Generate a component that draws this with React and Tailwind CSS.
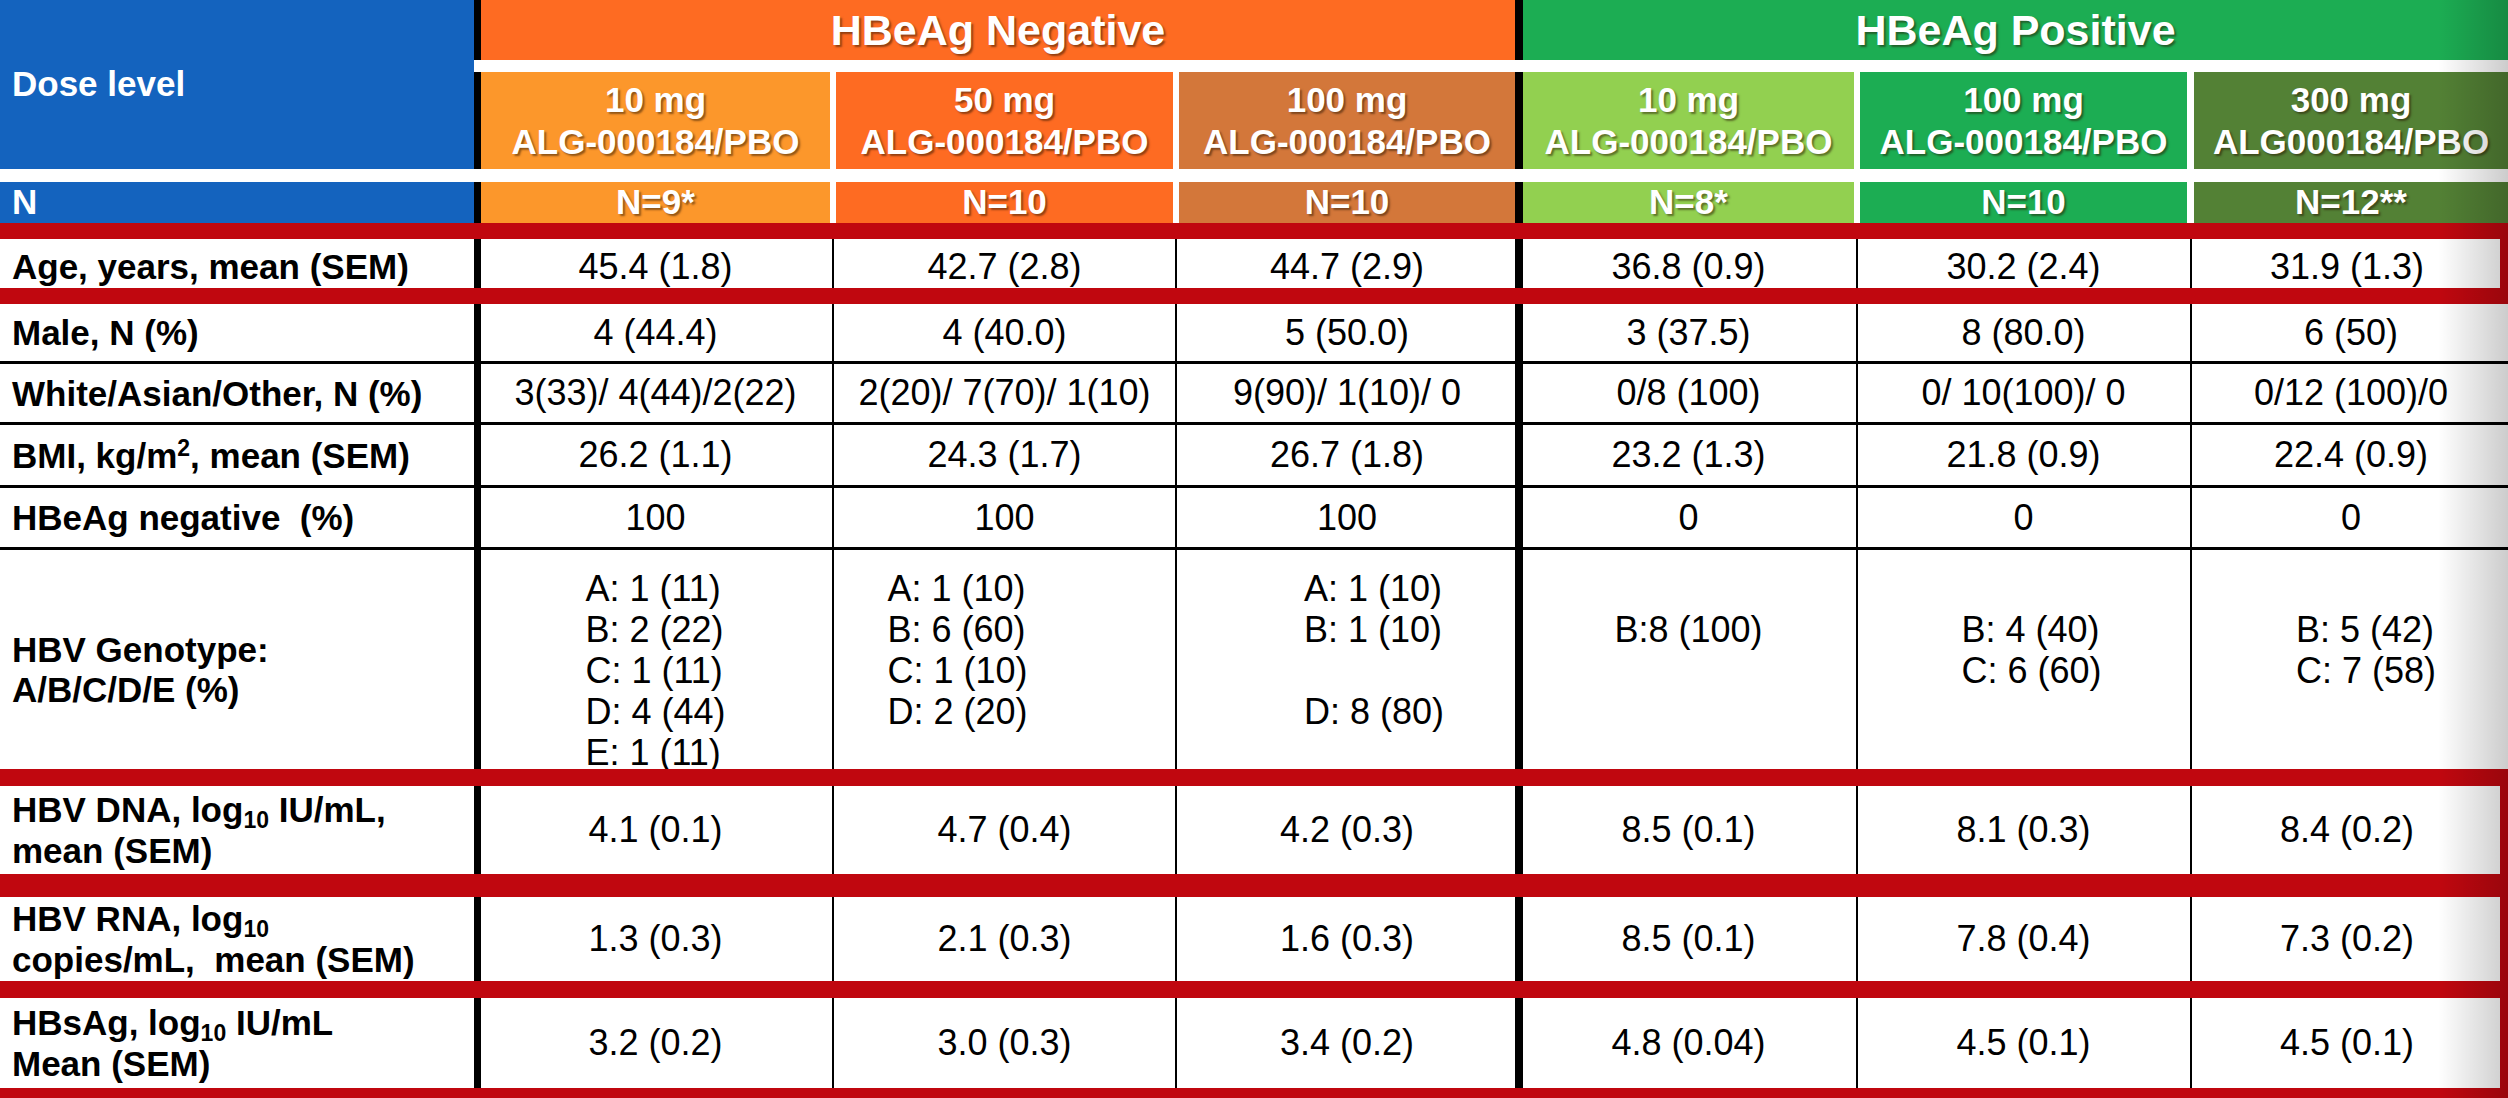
import React from "react";

const cellW = ["w-[349px]", "w-[337px]", "w-[336px]", "w-[331px]", "w-[327px]", "flex-1"];
const headBg = [
  "bg-[#fc972b]",
  "bg-[#fe6b22]",
  "bg-[#d3773a]",
  "bg-[#92d050]",
  "bg-[#1cad53]",
  "bg-[#538135]",
];
const shadow = "[text-shadow:2px_2px_2px_rgba(40,20,0,0.5)]";

// separators inside data rows: thick black at the group edges, thin ones between doses
function VLine({ i }) {
  if (i === 0) return <div className="w-[7px] shrink-0 bg-black" />;
  if (i === 3) return <div className="w-[8px] shrink-0 bg-black" />;
  return (
    <div className={`${i === 5 ? "w-[7px]" : "w-[6px]"} shrink-0 flex justify-center`}>
      <div className="w-[2px] bg-black" />
    </div>
  );
}

// separators inside the coloured header rows
function HGap({ i }) {
  if (i === 0) return <div className="w-[7px] shrink-0 bg-black" />;
  if (i === 3) return <div className="w-[8px] shrink-0 bg-black" />;
  return <div className={`${i === 5 ? "w-[7px]" : "w-[6px]"} shrink-0 bg-white`} />;
}

function Red({ h }) {
  return <div className={`${h} bg-[#c0070f]`} />;
}

function HLine() {
  return <div className="h-[3px] bg-black" />;
}

function DataRow({ height, label, values, boxed, pad = "" }) {
  return (
    <div className={`flex ${height}`}>
      <div
        className={`w-[474px] shrink-0 flex items-center pl-[12px] font-bold text-[35px] leading-[41px] ${pad}`}
      >
        <div>{label}</div>
      </div>
      {values.map((v, i) => (
        <React.Fragment key={i}>
          <VLine i={i} />
          <div className={`${cellW[i]} shrink-0 flex items-center justify-center text-[36px] whitespace-pre ${pad}`}>
            {v}
          </div>
        </React.Fragment>
      ))}
      {boxed ? <div className="w-[8px] shrink-0 bg-[#c0070f]" /> : null}
    </div>
  );
}

const doses = [
  ["10 mg", "ALG-000184/PBO"],
  ["50 mg", "ALG-000184/PBO"],
  ["100 mg", "ALG-000184/PBO"],
  ["10 mg", "ALG-000184/PBO"],
  ["100 mg", "ALG-000184/PBO"],
  ["300 mg", "ALG000184/PBO"],
];
const ns = ["N=9*", "N=10", "N=10", "N=8*", "N=10", "N=12**"];

const geno = [
  { lines: ["A: 1 (11)", "B: 2 (22)", "C: 1 (11)", "D: 4 (44)", "E: 1 (11)"], pad: "" },
  { lines: ["A: 1 (10)", "B: 6 (60)", "C: 1 (10)", "D: 2 (20)"], pad: "pr-[94px]" },
  { lines: ["A: 1 (10)", "B: 1 (10)", "", "D: 8 (80)"], pad: "pl-[54px]" },
  { lines: ["", "B:8 (100)"], pad: "" },
  { lines: ["", "B: 4 (40)", "C: 6 (60)"], pad: "pl-[16px]" },
  { lines: ["", "B: 5 (42)", "C: 7 (58)"], pad: "pl-[30px]" },
];

const Sub = () => <sub className="text-[23px]">10</sub>;

export default function App() {
  return (
    <div className="relative w-[2508px] h-[1098px] overflow-hidden bg-white text-black font-['Liberation_Sans',Arial,sans-serif]">
      {/* header */}
      <div className="flex h-[169px]">
        <div className="w-[474px] shrink-0 bg-[#1463be] flex items-center pl-[12px] text-white font-bold text-[35px]">
          Dose level
        </div>
        <div className="flex-1 flex flex-col">
          <div className={`flex h-[60px] text-white font-bold text-[43px] ${shadow}`}>
            <div className="w-[7px] shrink-0 bg-black" />
            <div className="w-[1034px] shrink-0 bg-[#fe6b22] flex items-center justify-center">HBeAg Negative</div>
            <div className="w-[8px] shrink-0 bg-black" />
            <div className="flex-1 bg-[#1cad53] flex items-center justify-center">HBeAg Positive</div>
          </div>
          <div className="h-[12px]" />
          <div className={`flex flex-1 text-white font-bold text-[35px] leading-[42px] ${shadow}`}>
            {doses.map((d, i) => (
              <React.Fragment key={i}>
                <HGap i={i} />
                <div className={`${cellW[i]} shrink-0 ${headBg[i]} flex flex-col items-center justify-center`}>
                  <div>{d[0]}</div>
                  <div>{d[1]}</div>
                </div>
              </React.Fragment>
            ))}
          </div>
        </div>
      </div>
      <div className="h-[13px]" />

      {/* N row */}
      <div className="flex h-[41px] text-white font-bold text-[35px]">
        <div className="w-[474px] shrink-0 bg-[#1463be] flex items-center pl-[12px]">N</div>
        {ns.map((n, i) => (
          <React.Fragment key={i}>
            <HGap i={i} />
            <div className={`${cellW[i]} shrink-0 ${headBg[i]} flex items-center justify-center ${shadow}`}>{n}</div>
          </React.Fragment>
        ))}
      </div>

      <Red h="h-[16px]" />
      <DataRow
        height="h-[49px]"
        boxed
        pad="pt-[6px]"
        label="Age, years, mean (SEM)"
        values={["45.4 (1.8)", "42.7 (2.8)", "44.7 (2.9)", "36.8 (0.9)", "30.2 (2.4)", "31.9 (1.3)"]}
      />
      <Red h="h-[16px]" />
      <DataRow
        height="h-[57px]"
        label="Male, N (%)"
        values={["4 (44.4)", "4 (40.0)", "5 (50.0)", "3 (37.5)", "8 (80.0)", "6 (50)"]}
      />
      <HLine />
      <DataRow
        height="h-[58px]"
        label="White/Asian/Other, N (%)"
        values={["3(33)/ 4(44)/2(22)", "2(20)/ 7(70)/ 1(10)", "9(90)/ 1(10)/ 0", "0/8 (100)", "0/ 10(100)/ 0", "0/12 (100)/0"]}
      />
      <HLine />
      <DataRow
        height="h-[60px]"
        label={
          <>
            BMI, kg/m<sup className="text-[23px]">2</sup>, mean (SEM)
          </>
        }
        values={["26.2 (1.1)", "24.3 (1.7)", "26.7 (1.8)", "23.2 (1.3)", "21.8 (0.9)", "22.4 (0.9)"]}
      />
      <HLine />
      <DataRow
        height="h-[59px]"
        label={<span className="whitespace-pre">HBeAg negative  (%)</span>}
        values={["100", "100", "100", "0", "0", "0"]}
      />
      <HLine />

      {/* genotype row */}
      <div className="flex h-[219px]">
        <div className="w-[474px] shrink-0 flex items-center pl-[12px] pt-[20px] font-bold text-[35px] leading-[40px]">
          <div>
            HBV Genotype:
            <br />
            A/B/C/D/E (%)
          </div>
        </div>
        {geno.map((g, i) => (
          <React.Fragment key={i}>
            <VLine i={i} />
            <div className={`${cellW[i]} shrink-0 flex justify-center pt-[18px] overflow-hidden text-[36px] ${g.pad}`}>
              <div className="flex flex-col items-start">
                {g.lines.map((l, j) => (
                  <div key={j} className="h-[41px] leading-[41px] whitespace-pre">
                    {l || "\u00a0"}
                  </div>
                ))}
              </div>
            </div>
          </React.Fragment>
        ))}
      </div>

      <Red h="h-[17px]" />
      <DataRow
        height="h-[88px]"
        boxed
        label={
          <>
            HBV DNA, log<Sub /> IU/mL,
            <br />
            mean (SEM)
          </>
        }
        values={["4.1 (0.1)", "4.7 (0.4)", "4.2 (0.3)", "8.5 (0.1)", "8.1 (0.3)", "8.4 (0.2)"]}
      />
      <Red h="h-[23px]" />
      <DataRow
        height="h-[84px]"
        boxed
        label={
          <span className="whitespace-pre">
            HBV RNA, log<Sub />
            {"\n"}copies/mL,  mean (SEM)
          </span>
        }
        values={["1.3 (0.3)", "2.1 (0.3)", "1.6 (0.3)", "8.5 (0.1)", "7.8 (0.4)", "7.3 (0.2)"]}
      />
      <Red h="h-[17px]" />
      <DataRow
        height="h-[90px]"
        boxed
        label={
          <>
            HBsAg, log<Sub /> IU/mL
            <br />
            Mean (SEM)
          </>
        }
        values={["3.2 (0.2)", "3.0 (0.3)", "3.4 (0.2)", "4.8 (0.04)", "4.5 (0.1)", "4.5 (0.1)"]}
      />
      <Red h="h-[10px]" />

      {/* slide edge shading */}
      <div className="pointer-events-none absolute right-0 top-0 bottom-0 w-[70px] bg-linear-to-r from-transparent to-black/20" />
    </div>
  );
}
